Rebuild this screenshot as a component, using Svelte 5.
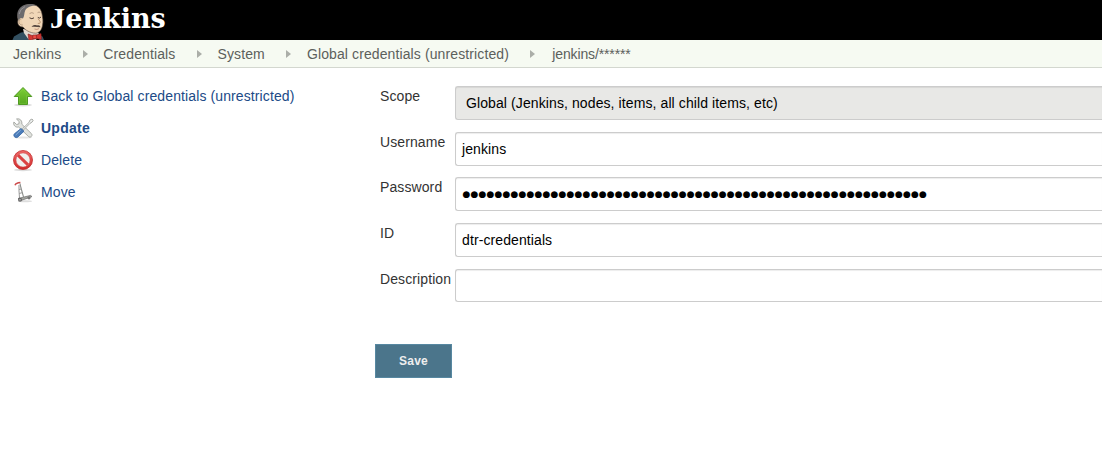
<script>
  const crumbs = ['Jenkins', 'Credentials', 'System', 'Global credentials (unrestricted)', 'jenkins/******'];
  const tasks = [
    { icon: 'up', label: 'Back to Global credentials (unrestricted)' },
    { icon: 'tools', label: 'Update', active: true },
    { icon: 'stop', label: 'Delete' },
    { icon: 'move', label: 'Move' }
  ];
  const fields = [
    { label: 'Scope', value: 'Global (Jenkins, nodes, items, all child items, etc)', kind: 'select' },
    { label: 'Username', value: 'jenkins', kind: 'text' },
    { label: 'Password', value: '●'.repeat(58), kind: 'secret' },
    { label: 'ID', value: 'dtr-credentials', kind: 'text' },
    { label: 'Description', value: '', kind: 'text' }
  ];
</script>

<header>
  <svg class="butler" width="34" height="40" viewBox="0 0 34 40">
    <path d="M.5 40 L2 36.5 L9 32.5 L13 32 L17 40Z M27 35 L30.5 36.5 L32 40 H27Z" fill="#335061" />
    <path d="M11 29 L12 33 L17 40 H24 L27 34 L25 31Z" fill="#e2d9cf" />
    <path d="M6 20 C5 13 8 5 17 4.5 C25 4 29 8 30 14 C30.5 18 31.5 21 30.5 25 C30 30 27 33 23.5 33.2 C18 33 13 30 11 27 C7 27 5 24 6 20Z" fill="#f0d6b7" stroke="#5c4b3f" stroke-width=".6" />
    <path d="M6.5 20 C3.6 14 6 7 13 4.8 C17 3.4 22 3.8 25.5 5.6 C19.5 5.4 15 7.2 13.2 10.5 C12 13 12.6 16 11 18.5 L9.2 18 C7.4 18 7.4 19.5 7.4 21.5Z" fill="#6d6b6d" />
    <path d="M7.2 14 L9 9.5 L13 6.6" stroke="#a19da0" stroke-width=".8" fill="none" />
    <path d="M9.5 18.8 C6 18.8 6 25.5 10.8 25" fill="#ecd0ae" stroke="#9b8168" stroke-width=".6" />
    <path d="M17.5 13.6 Q20 11.8 21.8 13.4 M25.6 12.6 Q27 11.4 28.4 12.6" stroke="#a78e77" stroke-width=".8" fill="none" />
    <path d="M17.5 17.8 Q20 19.6 22 17.8 M25.8 17.4 Q27.4 19 29 17" stroke="#4b3b33" stroke-width="1" fill="none" />
    <path d="M26 18.5 L28.4 22 Q28.4 24 25.8 23.4" stroke="#b08762" stroke-width=".8" fill="none" />
    <path d="M19.5 26.8 C21 24.6 23.5 24.8 25 25.4 C26.8 24.8 28.4 25.4 28.4 27.2 C25.5 27 23 26.4 19.5 26.8Z" fill="#564740" />
    <path d="M22.5 29 Q25 30.2 27 28.6" stroke="#b07864" stroke-width=".7" fill="none" />
    <path d="M16 34 L21.5 36 L29 33.5 L29.5 39.5 L24 38.5 L17 40.5Z" fill="#d33833" stroke="#811f20" stroke-width=".6" />
    <path d="M20.8 35 H24.4 V38.6 H20.8Z" fill="#ef4c43" stroke="#811f20" stroke-width=".6" />
  </svg>
  <span class="brand"><span class="cap">J</span>enkins</span>
</header>

<nav>
  {#each crumbs as crumb, i}
    {#if i}
      <span class="sep"><svg width="5" height="8" viewBox="0 0 5 8"><path d="M0 0 5 4 0 8Z" fill="#abaea8" /></svg></span>
    {/if}
    <span class="crumb" class:last={i === crumbs.length - 1}>{crumb}</span>
  {/each}
</nav>

<main>
  <aside>
    {#each tasks as task}
      <div class="task" class:active={task.active}>
        <svg width="24" height="24" viewBox="0 0 24 24">
          {#if task.icon === 'up'}
            <defs><linearGradient id="leaf" x2="0" y2="1"><stop stop-color="#7ccf35" /><stop offset="1" stop-color="#55a51f" /></linearGradient></defs>
            <ellipse cx="12" cy="21" rx="9" ry="1.4" fill="#ddd" />
            <path d="M12 3.5 L20.8 12.5 H16.5 V20.5 H7.5 V12.5 H3.2Z" fill="url(#leaf)" stroke="#4f9a22" stroke-width="1" stroke-linejoin="round" />
            <path d="M12 5.2 L18 11.6 H15.5 V19.4 H8.5 V11.6 H6Z" fill="none" stroke="#a2eb59" stroke-width=".6" opacity=".4" />
          {:else if task.icon === 'tools'}
            <ellipse cx="12" cy="21.5" rx="9" ry="1.1" fill="#e5e5e5" />
            <path d="M5.5 3 L8.2 5.6 L7.8 8 L5.6 8.5 L2.9 6 C1.8 9 4.5 11.8 7.5 11 L17.5 20.5 C19.4 22.3 22.3 19.6 20.4 17.6 L10.8 8.2 C11.5 5 9 2 5.5 3Z" fill="#e1e3df" stroke="#999c97" stroke-width=".8" />
            <path d="M21 3 L19 4 L18 6.4 L11.2 13 L12.3 14.1 L19 7.4 L21.2 6 L22.2 4.2Z" fill="#eceeed" stroke="#999c97" stroke-width=".8" />
            <path d="M10 12.5 L13 15.2 L6.7 21.2 C4.5 22.7 1.6 19.8 3.4 17.8Z" fill="#4c7dba" stroke="#3465a4" stroke-width=".8" />
            <path d="M9.8 14 L4.7 19" stroke="#8fb2dc" stroke-width=".9" />
          {:else if task.icon === 'stop'}
            <defs><linearGradient id="sign" x2="0" y2="1"><stop stop-color="#ee6b6b" /><stop offset="1" stop-color="#d02a2a" /></linearGradient></defs>
            <ellipse cx="12" cy="21.9" rx="9" ry="1.3" fill="#ddd" />
            <circle cx="12" cy="12" r="9.5" fill="url(#sign)" stroke="#c22a2a" stroke-width=".8" />
            <circle cx="12" cy="12" r="7" fill="#f0f0ee" stroke="#c94040" stroke-width=".4" />
            <path d="M7 7.2 L17 16.8" stroke="#db4242" stroke-width="3" />
          {:else}
            <ellipse cx="14" cy="21.3" rx="7" ry="1" fill="#ddd" />
            <path d="M9 3.5 L10 8 L12.5 16.8" stroke="#8b8e8b" stroke-width="1.1" fill="none" />
            <path d="M8 5 L8 11 L8.5 18 M8 9.5 L10.2 9 M8.2 13.5 L11.4 12.6" stroke="#999" stroke-width="1" fill="none" />
            <path d="M4 5.2 Q5 3 9.4 2.6" stroke="#cc4a4a" stroke-width="1.5" fill="none" />
            <path d="M7 18.5 L19.5 15.4 L21 16.6 L10 20.5Z" fill="#a5a8a2" stroke="#666" stroke-width=".7" />
            <circle cx="9" cy="19.7" r="2" fill="#666" /><circle cx="9" cy="19.7" r=".7" fill="#ccc" />
            <circle cx="18" cy="17.8" r="1.6" fill="#777" />
          {/if}
        </svg>
        <a href="#{task.icon}">{task.label}</a>
      </div>
    {/each}
  </aside>

  <form>
    {#each fields as field}
      <div class="row">
        <span class="label">{field.label}</span>
        <div class="control {field.kind}">{field.value}</div>
      </div>
    {/each}
    <button type="button">Save</button>
  </form>
</main>

<style>
  :global(body) {
    background: #fff;
    font-family: "Liberation Sans", Arial, sans-serif;
    font-size: 14px;
    line-height: 16px;
  }
  header {
    display: flex;
    height: 40px;
    background: #000;
    padding-left: 12px;
  }
  .butler { flex: none; }
  .brand {
    margin-left: 4px;
    color: #fff;
    font: bold 27px/38px "DejaVu Serif", serif;
  }
  .cap {
    font-family: "Liberation Serif", serif;
    font-size: 30px;
    line-height: 1;
    letter-spacing: .2px;
  }
  nav {
    display: flex;
    align-items: center;
    height: 27px;
    padding-left: 13px;
    background: #f6faf2;
    border-bottom: 1px solid #d3d7cf;
    color: #5c605c;
    white-space: nowrap;
  }
  .crumb { letter-spacing: .11px; }
  .last {
    padding-left: 1.3px;
    letter-spacing: -.14px;
  }
  .sep {
    box-sizing: border-box;
    width: 42.1px;
    padding: 1px 0 0 21.4px;
    line-height: 0;
  }
  main { display: flex; }
  aside {
    flex: none;
    width: 364px;
    padding: 16px 0 0 11px;
  }
  .task {
    display: flex;
    align-items: center;
    gap: 6px;
    height: 24px;
    margin-bottom: 8px;
  }
  a {
    color: #204a87;
    text-decoration: none;
    white-space: nowrap;
    letter-spacing: .11px;
  }
  .active a {
    font-weight: bold;
    letter-spacing: .25px;
  }
  form {
    flex: 1;
    padding-top: 18px;
  }
  .row {
    display: flex;
    height: 45.7px;
  }
  .label {
    width: 75px;
    padding: 2px 0 0 5px;
    color: #333;
    letter-spacing: .1px;
  }
  .control {
    box-sizing: border-box;
    flex: 1;
    height: 33.6px;
    padding-left: 6px;
    border: 1px solid #ccc;
    border-right: 0;
    border-radius: 3px 0 0 3px;
    box-shadow: inset 0 1px 1px rgba(0, 0, 0, .075);
    color: #000;
    line-height: 32px;
    white-space: nowrap;
    letter-spacing: .1px;
  }
  .row:nth-child(2) .control { height: 34px; }
  .select {
    padding-left: 10px;
    background: #e8e8e6;
  }
  .secret {
    padding-left: 6.5px;
    font-family: "DejaVu Sans", sans-serif;
    font-size: 9px;
    letter-spacing: .155px;
  }
  button {
    display: block;
    width: 77px;
    height: 34px;
    margin-top: 29.5px;
    padding: 0;
    border: 1px solid #5788a1;
    background: #4b758b;
    color: #eee;
    font: bold 12px "Liberation Sans", Arial, sans-serif;
    letter-spacing: .2px;
  }
</style>
